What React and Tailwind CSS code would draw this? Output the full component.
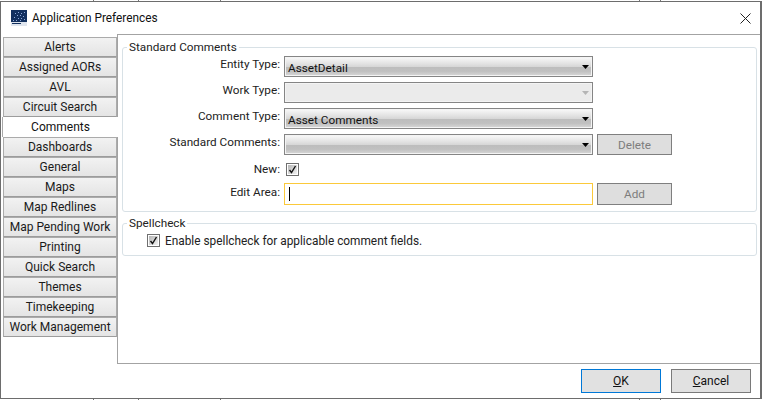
const FONT = "font-['Roboto','Open_Sans',sans-serif]";

const tabs = ["Alerts","Assigned AORs","AVL","Circuit Search","Comments","Dashboards","General","Maps","Map Redlines","Map Pending Work","Printing","Quick Search","Themes","Timekeeping","Work Management"];

function Ticks() {
  return (
    <div className="flex h-px w-[766px]">
      <div className="ml-[93px] w-px bg-[#777]" />
      <div className="ml-[44px] w-px bg-[#777]" />
      <div className="ml-[81px] w-px bg-[#777]" />
      <div className="ml-[418px] w-px bg-[#777]" />
      <div className="ml-[20px] w-px bg-[#777]" />
    </div>
  );
}

function AppIcon() {
  return (
    <svg width="16" height="16" viewBox="0 0 16 16" className="block">
      <rect width="16" height="16" fill="#12305f" />
      <rect x="0" y="12" width="16" height="4" fill="#dfe5ee" />
      <rect x="1" y="13" width="9" height="1" fill="#12305f" />
      {[[4,3],[7,2],[10,3],[13,2],[6,5],[9,5],[12,6],[3,7],[7,8],[10,8],[13,9],[5,10],[2,10],[9,10]].map(([x,y],i)=>(
        <rect key={i} x={x} y={y} width="1" height="1" fill="#8fa8d8" />
      ))}
    </svg>
  );
}

function Arrow({ disabled }) {
  return (
    <svg width="7" height="4" viewBox="0 0 7 4" className="block">
      <path d="M0 0H7L3.5 4Z" fill={disabled ? "#b5b5b5" : "#000"} />
    </svg>
  );
}

function Combo({ value, disabled }) {
  return (
    <div className={`flex h-[21px] w-[309px] items-center justify-between border border-[#858585] pl-[3px] pr-[3px] shadow-[inset_0_0_0_1px_#f4f4f4] ${disabled ? "bg-[#ebebeb]" : "bg-[linear-gradient(180deg,#fafafa_0%,#e6e6e6_30%,#d6d6d6_52%,#bdbdbd_55%,#c0c0c0_75%,#d8d8d8_100%)]"}`}>
      <span className="pt-[2px] text-[11.75px] leading-[16px] text-[#111]">{value}</span>
      <Arrow disabled={disabled} />
    </div>
  );
}

function Check() {
  return (
    <div className="flex h-[13px] w-[13px] items-center justify-center border border-[#6f6f6f] bg-[#fff] p-px">
      <div className="flex h-full w-full items-center justify-center bg-[linear-gradient(135deg,#b5b5b5,#f2f2f2)]">
        <svg width="9" height="9" viewBox="0 0 9 9" className="block">
          <path d="M1.5 5L3.5 7.5L7.5 1" fill="none" stroke="#111" strokeWidth="1.4" />
        </svg>
      </div>
    </div>
  );
}

function Label({ children, up }) {
  return <div className={`pr-px text-right text-[11.75px] leading-[16px] text-[#222] ${up}`}>{children}</div>;
}

function DisabledBtn({ children, h }) {
  return (
    <div className={`flex w-[75px] items-center justify-center border border-[#7f7f7f] bg-[#dedede] pt-[2px] text-[11.75px] text-[#7d7d7d] ${h}`}>{children}</div>
  );
}

function Legend({ children }) {
  return <div className="absolute left-[4px] top-[-9px] bg-white px-[2px] text-[11.75px] leading-[16px] text-[#222]">{children}</div>;
}

export default function App() {
  return (
    <div className={`h-[400px] w-[766px] overflow-hidden bg-white ${FONT}`}>
      <Ticks />
      <div className="flex h-[398px] w-[762px] flex-col border border-r-2 border-[#6d6d6d] bg-white">
        <div className="flex h-[32px] shrink-0 items-center pl-[10px] pr-[9px]">
          <AppIcon />
          <div className="ml-[5px] flex-1 text-[11.85px] leading-[16px] text-[#111]">Application Preferences</div>
          <svg width="11" height="11" viewBox="0 0 11 11" className="block">
            <path d="M0.5 0.5L10.5 10.5M10.5 0.5L0.5 10.5" stroke="#222" strokeWidth="1" />
          </svg>
        </div>

        <div className="flex h-[330px] shrink-0">
          <div className="flex w-[116px] shrink-0 flex-col pl-[2px] pt-[3px]">
            {tabs.map((t) =>
              t === "Comments" ? (
                <div key={t} className="relative z-10 -ml-px flex h-[20px] w-[116px] items-center justify-center border-l border-[#a8a8a8] bg-white text-[12px] text-[#111]">{t}</div>
              ) : (
                <div key={t} className="flex h-[20px] w-[114px] items-center justify-center whitespace-nowrap border border-[#ababab] border-b-[#9c9c9c] bg-[linear-gradient(180deg,#f2f2f2,#e4e4e4)] text-[12px] text-[#1a1a1a]">{t}</div>
              )
            )}
          </div>

          <div className="flex-1 border-y border-l border-[#a3a3a3] bg-white pl-[4px] pr-[3px] pt-[12px]">
            <div className="relative h-[165px] rounded-[3px] border border-[#d8e1e6] pt-[8px]">
              <Legend>Standard Comments</Legend>
              <div className="grid grid-cols-[158px_309px_75px] items-center gap-x-[3px] gap-y-[5px]">
                <Label up="pb-[5px]">Entity Type:</Label>
                <Combo value="AssetDetail" />
                <div />
                <Label up="pb-[5px]">Work Type:</Label>
                <Combo disabled />
                <div />
                <Label up="pb-[5px]">Comment Type:</Label>
                <Combo value="Asset Comments" />
                <div />
                <Label up="pb-[5px]">Standard Comments:</Label>
                <Combo />
                <div className="ml-[1px]"><DisabledBtn h="h-[21px]">Delete</DisabledBtn></div>
                <Label up="">New:</Label>
                <div className="flex h-[18px] items-center pl-[2px]"><Check /></div>
                <div />
                <Label up="pb-[5px]">Edit Area:</Label>
                <div className="flex h-[22px] w-[309px] items-center border border-[#fbc93a] pl-[4px]">
                  <div className="h-[14px] w-px bg-black" />
                </div>
                <div className="ml-[1px]"><DisabledBtn h="h-[22px]">Add</DisabledBtn></div>
              </div>
            </div>

            <div className="relative mt-[11px] h-[33px] rounded-[3px] border border-[#d8e1e6] pl-[24px] pt-[10px]">
              <Legend>Spellcheck</Legend>
              <div className="flex items-center gap-[5px]">
                <Check />
                <span className="pt-[1px] text-[11.85px] leading-[12px] text-[#222]">Enable spellcheck for applicable comment fields.</span>
              </div>
            </div>
          </div>
        </div>

        <div className="flex flex-1 justify-end gap-[10px] pr-[9px] pt-[5px]">
          <div className="flex h-[24px] w-[80px] items-center justify-center border border-[#0078d7] bg-[#e1e1e1] text-[12px] text-[#111]"><span><u>O</u>K</span></div>
          <div className="flex h-[24px] w-[80px] items-center justify-center border border-[#7a7a7a] bg-[#e1e1e1] text-[12px] text-[#111]"><span><u>C</u>ancel</span></div>
        </div>
      </div>
      <Ticks />
    </div>
  );
}
